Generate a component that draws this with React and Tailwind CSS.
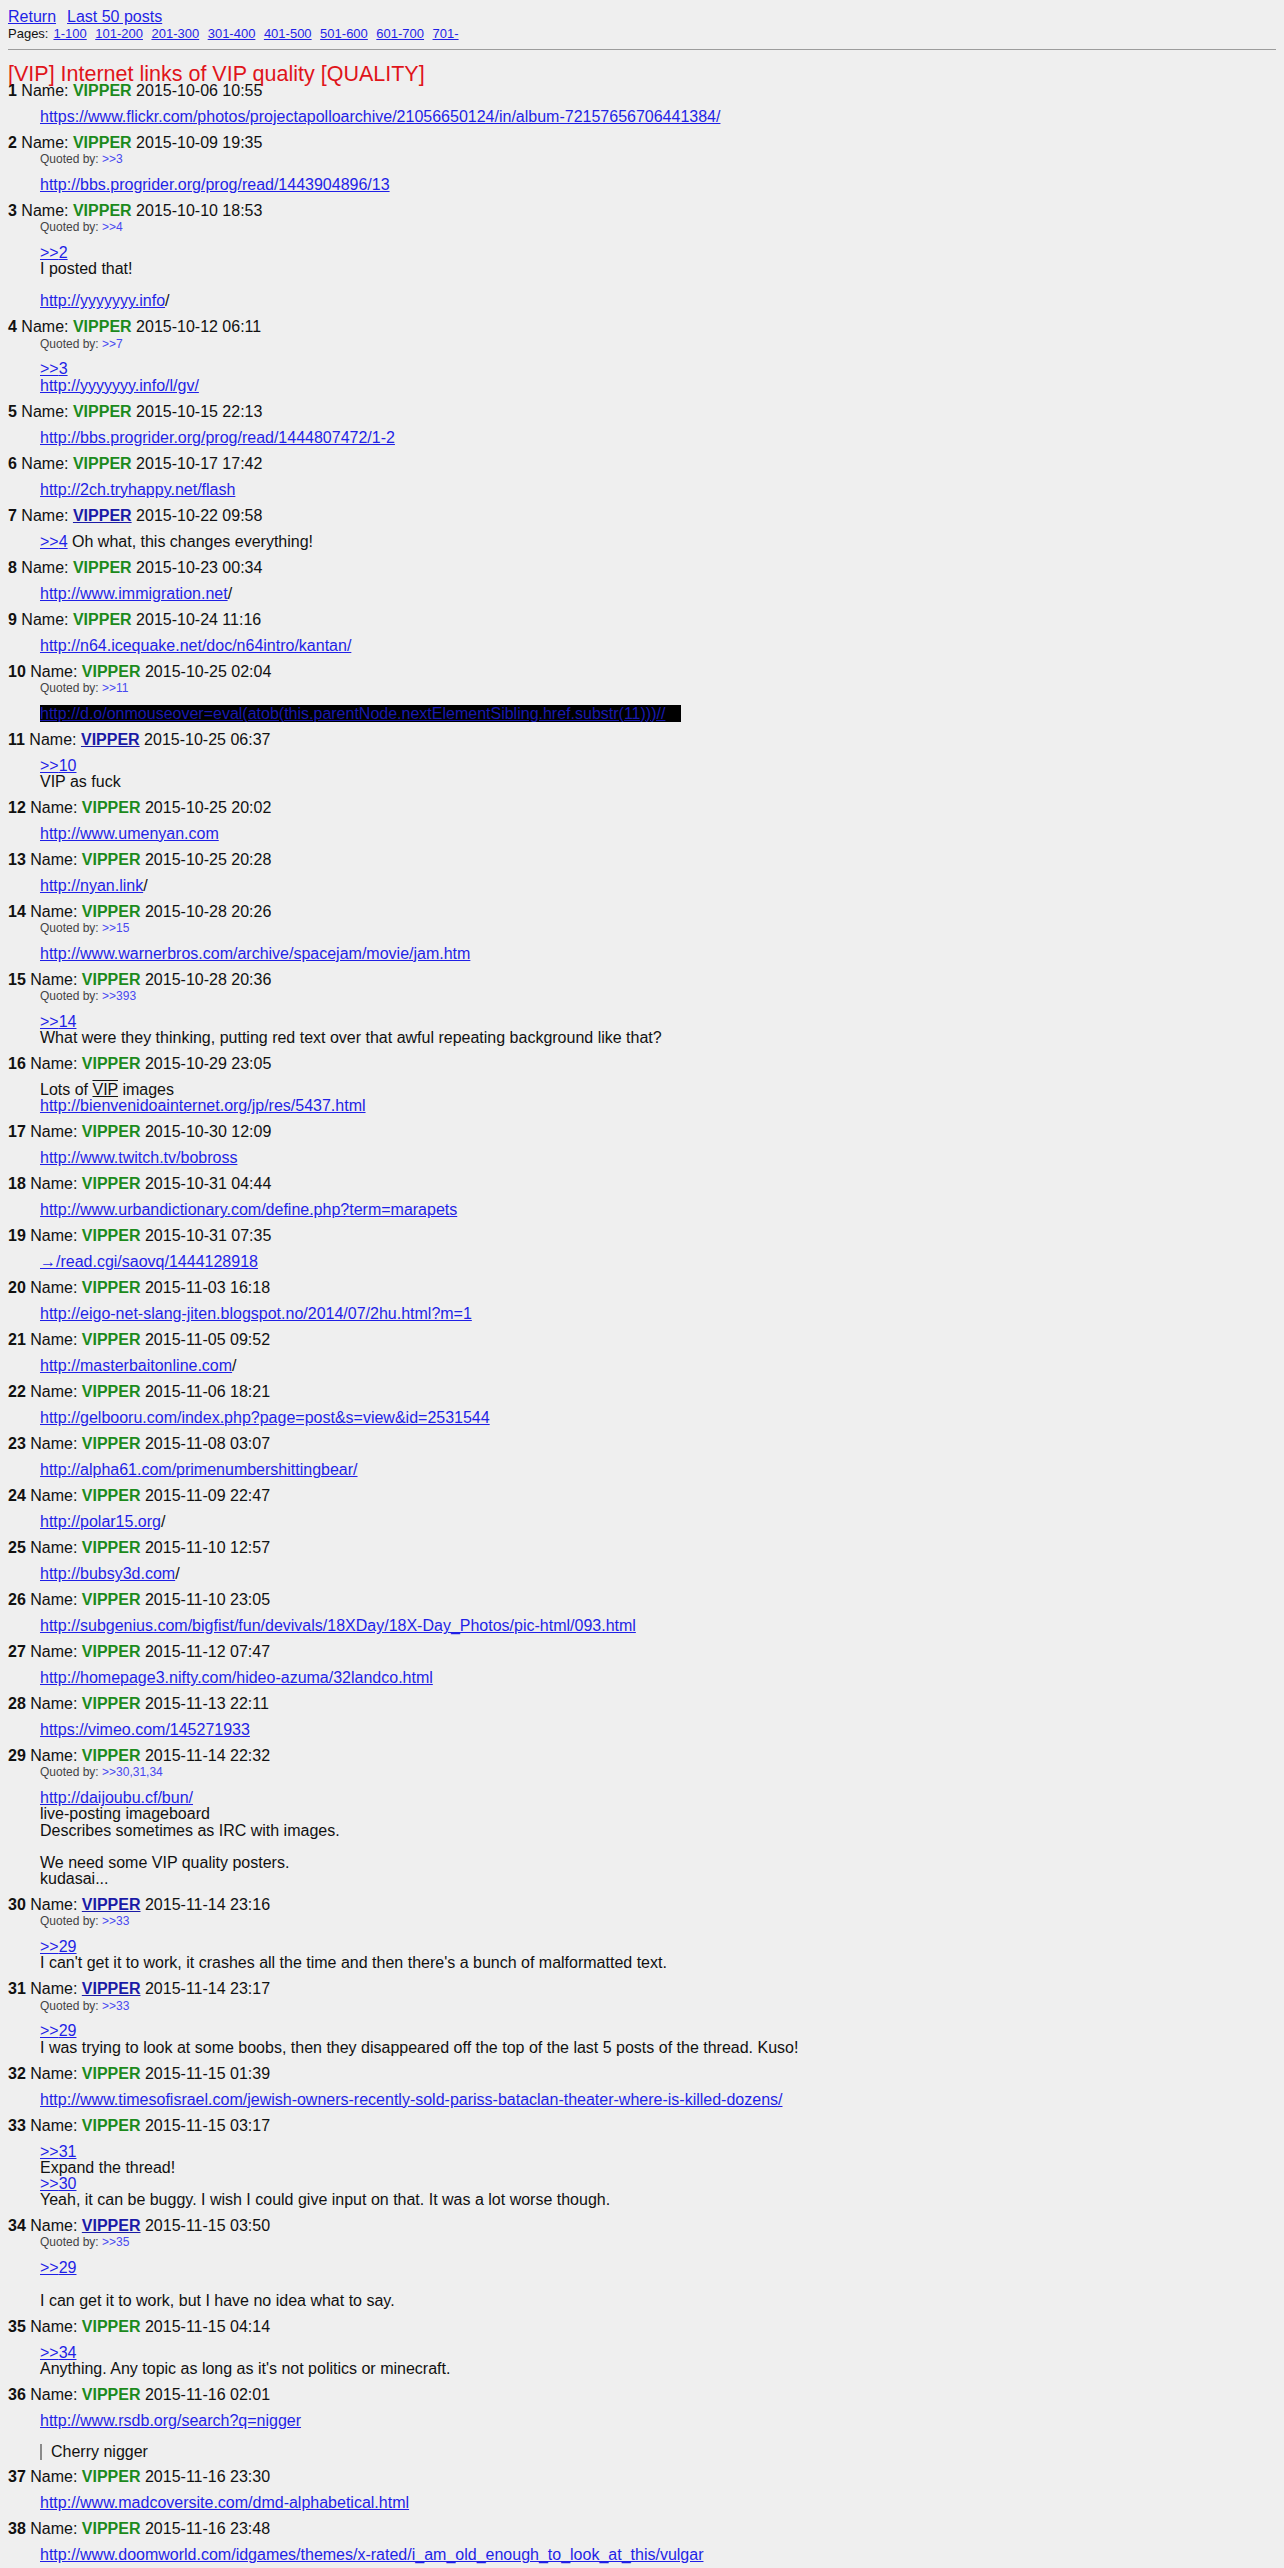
import React from "react";

const A = ({ children }) => (
  <a href="#" className="text-[#1f1fe6] underline">
    {children}
  </a>
);

const Q = ({ children }) => (
  <a href="#" className="text-[#1f1fe6] underline">
    &gt;&gt;{children}
  </a>
);

const posts = [
  { n: 1, d: "2015-10-06 10:55", body: [<A>https://www.flickr.com/photos/projectapolloarchive/21056650124/in/album-72157656706441384/</A>] },
  { n: 2, d: "2015-10-09 19:35", q: "3", body: [<A>http://bbs.progrider.org/prog/read/1443904896/13</A>] },
  { n: 3, d: "2015-10-10 18:53", q: "4", body: [<Q>2</Q>, "I posted that!", "", <><A>http://yyyyyyy.info</A>/</>] },
  { n: 4, d: "2015-10-12 06:11", q: "7", body: [<Q>3</Q>, <A>http://yyyyyyy.info/l/gv/</A>] },
  { n: 5, d: "2015-10-15 22:13", body: [<A>http://bbs.progrider.org/prog/read/1444807472/1-2</A>] },
  { n: 6, d: "2015-10-17 17:42", body: [<A>http://2ch.tryhappy.net/flash</A>] },
  { n: 7, d: "2015-10-22 09:58", sage: true, body: [<><Q>4</Q> Oh what, this changes everything!</>] },
  { n: 8, d: "2015-10-23 00:34", body: [<><A>http://www.immigration.net</A>/</>] },
  { n: 9, d: "2015-10-24 11:16", body: [<A>http://n64.icequake.net/doc/n64intro/kantan/</A>] },
  {
    n: 10,
    d: "2015-10-25 02:04",
    q: "11",
    body: [
      <span className="bg-black pr-[16px]">
        <a href="#" className="text-[#1a1ab0] underline">
          http://d.o/onmouseover=eval(atob(this.parentNode.nextElementSibling.href.substr(11)))//
        </a>
      </span>,
    ],
  },
  { n: 11, d: "2015-10-25 06:37", sage: true, body: [<Q>10</Q>, "VIP as fuck"] },
  { n: 12, d: "2015-10-25 20:02", body: [<A>http://www.umenyan.com</A>] },
  { n: 13, d: "2015-10-25 20:28", body: [<><A>http://nyan.link</A>/</>] },
  { n: 14, d: "2015-10-28 20:26", q: "15", body: [<A>http://www.warnerbros.com/archive/spacejam/movie/jam.htm</A>] },
  { n: 15, d: "2015-10-28 20:36", q: "393", body: [<Q>14</Q>, "What were they thinking, putting red text over that awful repeating background like that?"] },
  {
    n: 16,
    d: "2015-10-29 23:05",
    body: [
      <>
        Lots of <span className="[text-decoration-line:underline_overline]">VIP</span> images
      </>,
      <A>http://bienvenidoainternet.org/jp/res/5437.html</A>,
    ],
  },
  { n: 17, d: "2015-10-30 12:09", body: [<A>http://www.twitch.tv/bobross</A>] },
  { n: 18, d: "2015-10-31 04:44", body: [<A>http://www.urbandictionary.com/define.php?term=marapets</A>] },
  { n: 19, d: "2015-10-31 07:35", body: [<A>→/read.cgi/saovq/1444128918</A>] },
  { n: 20, d: "2015-11-03 16:18", body: [<A>http://eigo-net-slang-jiten.blogspot.no/2014/07/2hu.html?m=1</A>] },
  { n: 21, d: "2015-11-05 09:52", body: [<><A>http://masterbaitonline.com</A>/</>] },
  { n: 22, d: "2015-11-06 18:21", body: [<A>http://gelbooru.com/index.php?page=post&amp;s=view&amp;id=2531544</A>] },
  { n: 23, d: "2015-11-08 03:07", body: [<A>http://alpha61.com/primenumbershittingbear/</A>] },
  { n: 24, d: "2015-11-09 22:47", body: [<><A>http://polar15.org</A>/</>] },
  { n: 25, d: "2015-11-10 12:57", body: [<><A>http://bubsy3d.com</A>/</>] },
  { n: 26, d: "2015-11-10 23:05", body: [<A>http://subgenius.com/bigfist/fun/devivals/18XDay/18X-Day_Photos/pic-html/093.html</A>] },
  { n: 27, d: "2015-11-12 07:47", body: [<A>http://homepage3.nifty.com/hideo-azuma/32landco.html</A>] },
  { n: 28, d: "2015-11-13 22:11", body: [<A>https://vimeo.com/145271933</A>] },
  {
    n: 29,
    d: "2015-11-14 22:32",
    q: "30,31,34",
    body: [
      <A>http://daijoubu.cf/bun/</A>,
      "live-posting imageboard",
      "Describes sometimes as IRC with images.",
      "",
      "We need some VIP quality posters.",
      "kudasai...",
    ],
  },
  { n: 30, d: "2015-11-14 23:16", sage: true, q: "33", body: [<Q>29</Q>, "I can't get it to work, it crashes all the time and then there's a bunch of malformatted text."] },
  { n: 31, d: "2015-11-14 23:17", sage: true, q: "33", body: [<Q>29</Q>, "I was trying to look at some boobs, then they disappeared off the top of the last 5 posts of the thread. Kuso!"] },
  { n: 32, d: "2015-11-15 01:39", body: [<A>http://www.timesofisrael.com/jewish-owners-recently-sold-pariss-bataclan-theater-where-is-killed-dozens/</A>] },
  {
    n: 33,
    d: "2015-11-15 03:17",
    body: [<Q>31</Q>, "Expand the thread!", <Q>30</Q>, "Yeah, it can be buggy. I wish I could give input on that. It was a lot worse though."],
  },
  { n: 34, d: "2015-11-15 03:50", sage: true, q: "35", body: [<Q>29</Q>, "", "I can get it to work, but I have no idea what to say."] },
  { n: 35, d: "2015-11-15 04:14", body: [<Q>34</Q>, "Anything. Any topic as long as it's not politics or minecraft."] },
  { n: 36, d: "2015-11-16 02:01", body: [<A>http://www.rsdb.org/search?q=nigger</A>], quote: "Cherry nigger" },
  { n: 37, d: "2015-11-16 23:30", body: [<A>http://www.madcoversite.com/dmd-alphabetical.html</A>] },
  { n: 38, d: "2015-11-16 23:48", body: [<A>http://www.doomworld.com/idgames/themes/x-rated/i_am_old_enough_to_look_at_this/vulgar</A>] },
];

function Post({ p }) {
  return (
    <div>
      <div className="text-[16px] leading-[16.2px] whitespace-nowrap">
        <span className="font-bold">{p.n}</span> Name:{" "}
        {p.sage ? (
          <a href="#" className="font-bold underline text-[#1a1aa6]">
            VIPPER
          </a>
        ) : (
          <span className="font-bold text-[#1c8a1c]">VIPPER</span>
        )}{" "}
        {p.d}
      </div>
      {p.q && (
        <div className="pl-[32px] text-[12px] leading-[16px] text-[#444444]">
          Quoted by:{" "}
          <a href="#" className="text-[#4848f0]">
            &gt;&gt;{p.q}
          </a>
        </div>
      )}
      <div className={`pl-[32px] pt-[9.8px] ${p.quote ? "pb-[9px]" : "pb-[9.8px]"} text-[16px] leading-[16.2px]`}>
        {p.body.map((line, i) => (
          <div key={i} className="min-h-[16.2px]">
            {line}
          </div>
        ))}
        {p.quote && (
          <div className="mt-[14.8px] border-l-2 border-[#8a8a8a] pl-[9px] leading-[16px]">{p.quote}</div>
        )}
      </div>
    </div>
  );
}

export default function App() {
  return (
    <div
      className="min-h-screen bg-[#efefef] p-[8px] text-[#111111]"
      style={{ fontFamily: '"Liberation Sans", Arial, sans-serif' }}
    >
      <div className="text-[16px] leading-[18.4px]">
        <a href="#" className="text-[#1f1fe6] underline">
          Return
        </a>
        <span className="inline-block w-[11px]" />
        <a href="#" className="text-[#1f1fe6] underline">
          Last 50 posts
        </a>
      </div>
      <div className="flex text-[13px] leading-[15px]">
        <span className="mr-[5px]">Pages:</span>
        {["1-100", "101-200", "201-300", "301-400", "401-500", "501-600", "601-700", "701-"].map((t) => (
          <a key={t} href="#" className="mr-[8.5px] text-[#1f1fe6] underline">
            {t}
          </a>
        ))}
      </div>
      <div className="mt-[8px] border-t border-[#9c9c9c]" />
      <div className="mt-[14.4px] text-[21.5px] leading-[18px] text-[#e0141a]">
        [VIP] Internet links of VIP quality [QUALITY]
      </div>
      <div>
        {posts.map((p) => (
          <Post key={p.n} p={p} />
        ))}
      </div>
    </div>
  );
}
